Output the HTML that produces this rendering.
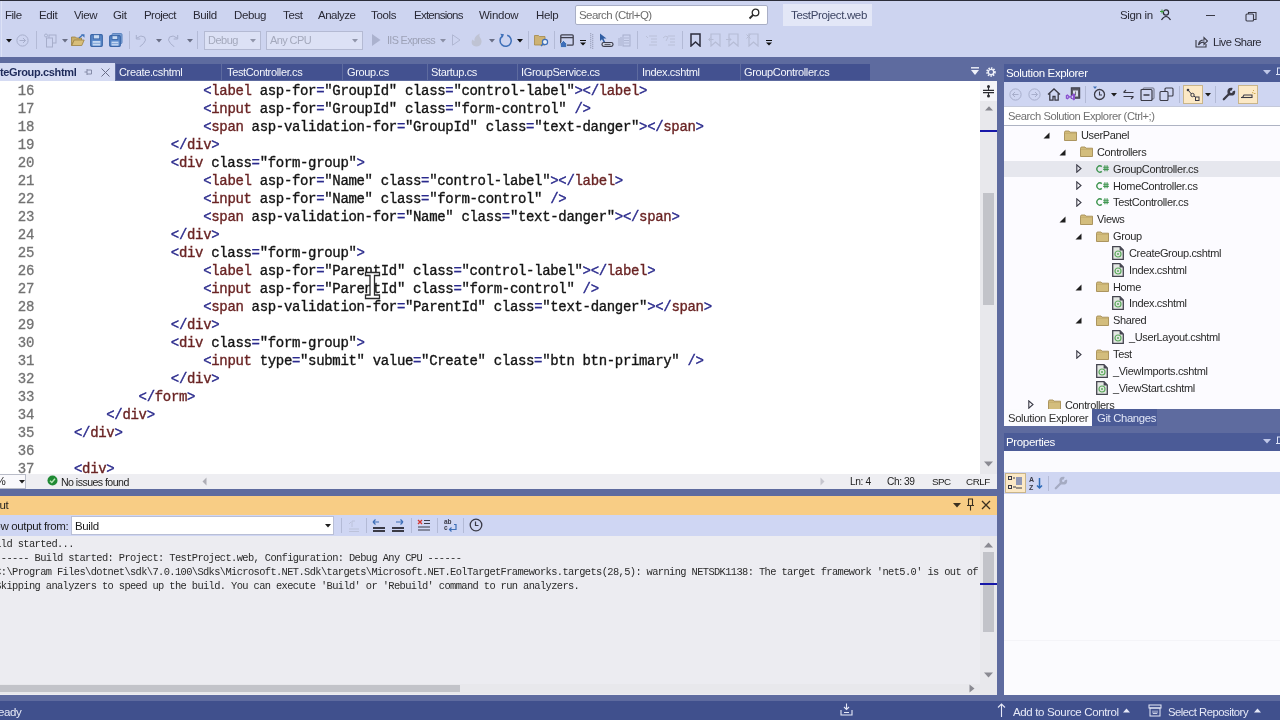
<!DOCTYPE html>
<html><head><meta charset="utf-8"><style>
*{margin:0;padding:0;box-sizing:border-box}
html,body{width:1280px;height:720px;overflow:hidden;}
body{will-change:transform;background:#CDD4F0;font-family:"Liberation Sans",sans-serif;font-size:11px;letter-spacing:-0.35px;color:#1E1E1E}
.a{position:absolute;display:block}
.t{position:absolute;white-space:pre;line-height:14px}
.menu{top:8px;color:#2A2A36;font-size:11.5px}
.code{position:absolute;font-family:"Liberation Mono",monospace;font-size:14px;letter-spacing:-0.33px;line-height:18px;white-space:pre;color:#141414;-webkit-text-stroke:0.35px currentColor}
.ln{position:absolute;white-space:pre;left:0;width:34px;text-align:right;font-family:"Liberation Mono",monospace;font-size:14px;letter-spacing:-0.33px;line-height:18px;color:#727272;-webkit-text-stroke:0.3px currentColor}
.b{color:#2A2A8C}.r{color:#6A2424}
.out{position:absolute;left:0;font-family:"Liberation Mono",monospace;font-size:10.4px;letter-spacing:-0.62px;line-height:13.9px;white-space:pre;color:#2A2A2A}
.tab{position:absolute;top:64px;height:16px;background:#435190;color:#F4F6FC}
.tab span{position:absolute;top:2px;white-space:pre}
</style></head><body>
<div class="a" style="left:0px;top:0px;width:1280px;height:1px;background:#2B2D3A;"></div>
<div class="a" style="left:1px;top:1px;width:1px;height:56px;background:#DDE2F6;"></div>
<div class="t menu" style="left:5px;letter-spacing:-0.5px">File</div>
<div class="t menu" style="left:39px;letter-spacing:-0.35px">Edit</div>
<div class="t menu" style="left:74px;letter-spacing:-0.35px">View</div>
<div class="t menu" style="left:113px;letter-spacing:-0.35px">Git</div>
<div class="t menu" style="left:144px;letter-spacing:-0.55px">Project</div>
<div class="t menu" style="left:193px;letter-spacing:-0.35px">Build</div>
<div class="t menu" style="left:234px;letter-spacing:-0.35px">Debug</div>
<div class="t menu" style="left:283px;letter-spacing:-0.35px">Test</div>
<div class="t menu" style="left:318px;letter-spacing:-0.5px">Analyze</div>
<div class="t menu" style="left:371px;letter-spacing:-0.35px">Tools</div>
<div class="t menu" style="left:414px;letter-spacing:-0.75px">Extensions</div>
<div class="t menu" style="left:479px;letter-spacing:-0.25px">Window</div>
<div class="t menu" style="left:536px;letter-spacing:-0.35px">Help</div>
<div class="a" style="left:575px;top:5px;width:193px;height:20px;background:#fff;border:1px solid #A9AFC6;border-radius:2px"></div>
<div class="t menu" style="left:579px;color:#6D6D6D;letter-spacing:-0.55px">Search (Ctrl+Q)</div>
<svg class="a" style="left:748px;top:8px" width="12" height="13" viewBox="0 0 12 13"><circle cx="7.5" cy="4.5" r="3.3" fill="none" stroke="#2A2A2A" stroke-width="1.3"/><path d="M5.2 6.8 L1.5 10.5" stroke="#2A2A2A" stroke-width="1.8"/></svg>
<div class="a" style="left:783px;top:4px;width:89px;height:22px;background:#E3E7F7;"></div>
<div class="t menu" style="left:791px;color:#3C4463">TestProject.web</div>
<div class="t menu" style="left:1120px">Sign in</div>
<svg class="a" style="left:1158px;top:8px" width="14" height="13" viewBox="0 0 14 13"><circle cx="8" cy="4.5" r="2.6" fill="none" stroke="#2A2A36" stroke-width="1.2"/><path d="M3.5 12 Q8 5 12.5 12" fill="none" stroke="#2A2A36" stroke-width="1.2"/><path d="M2 3.5h4M4 1.5v4" stroke="#3A9A3A" stroke-width="1"/></svg>
<div class="a" style="left:1206px;top:15px;width:9px;height:1px;background:#3A3A46;"></div>
<svg class="a" style="left:1245px;top:11px" width="13" height="11" viewBox="0 0 13 11"><rect x="1" y="3" width="7.5" height="7" fill="none" stroke="#3A3A46" stroke-width="1.1" rx="1"/><path d="M3.5 3V1.5h7.5v7H8.5" fill="none" stroke="#3A3A46" stroke-width="1.1"/></svg>
<svg class="a" style="left:6px;top:39px" width="6" height="4" viewBox="0 0 6 4"><path d="M0 0h6L3 3.5z" fill="#111"/></svg>
<svg class="a" style="left:16px;top:34px" width="13" height="13" viewBox="0 0 13 13"><circle cx="6.5" cy="6.5" r="5.6" fill="none" stroke="#A7AECB" stroke-width="1"/><path d="M3.5 6.5h6M7 4l2.5 2.5L7 9" fill="none" stroke="#A7AECB" stroke-width="1"/></svg>
<div class="a" style="left:36px;top:31px;width:1px;height:18px;background:#B3BAD6;"></div>
<svg class="a" style="left:43px;top:33px" width="14" height="15" viewBox="0 0 14 15"><rect x="6" y="2" width="7" height="8" fill="none" stroke="#A7AECB"/><rect x="3.5" y="5" width="6" height="9" fill="#CDD4F0" stroke="#A7AECB"/><circle cx="3" cy="2.5" r="1.5" fill="none" stroke="#A7AECB"/></svg>
<svg class="a" style="left:62px;top:39px" width="6" height="4" viewBox="0 0 6 4"><path d="M0 0h6L3 3.5z" fill="#6A6F86"/></svg>
<svg class="a" style="left:71px;top:34px" width="14" height="12" viewBox="0 0 14 12"><path d="M0.5 3h4l1 1h5v2.5H3L0.5 11.5z" fill="#C9AE6A" stroke="#9C8243" stroke-width="0.8"/><path d="M0.8 11.5 L3.2 6h10l-2.4 5.5z" fill="#D8BE7A" stroke="#9C8243" stroke-width="0.8"/><path d="M8 4 L11.5 1" stroke="#3F72B8" stroke-width="1.3"/><path d="M10 0.3h3.5v3.5z" fill="#3F72B8"/></svg>
<svg class="a" style="left:90px;top:34px" width="13" height="13" viewBox="0 0 13 13"><rect x="0.7" y="0.7" width="11.6" height="11.6" rx="1" fill="#5B8ACB" stroke="#3A66A8" stroke-width="1.2"/><rect x="3.3" y="0.7" width="6.4" height="4.2" fill="#C9DBF3" stroke="#3A66A8" stroke-width="0.9"/><rect x="2.6" y="7" width="7.8" height="4.6" fill="#C5D8F2"/><path d="M2.6 9.3h7.8" stroke="#6E97CF" stroke-width="0.8"/></svg>
<svg class="a" style="left:109px;top:33px" width="14" height="14" viewBox="0 0 14 14"><rect x="3" y="0.6" width="10" height="10" rx="1" fill="#7FA3D6" stroke="#5A82BD" stroke-width="1"/><rect x="0.7" y="2.7" width="10.6" height="10.6" rx="1" fill="#5B8ACB" stroke="#3A66A8" stroke-width="1.2"/><rect x="3" y="2.7" width="5.8" height="3.8" fill="#C9DBF3" stroke="#3A66A8" stroke-width="0.9"/><rect x="2.5" y="8.6" width="7" height="4" fill="#C5D8F2"/><path d="M2.5 10.6h7" stroke="#6E97CF" stroke-width="0.8"/></svg>
<div class="a" style="left:129px;top:31px;width:1px;height:18px;background:#B3BAD6;"></div>
<svg class="a" style="left:135px;top:34px" width="13" height="13" viewBox="0 0 13 13"><path d="M2 4 Q6 0.5 9.5 3 Q12 6 8.5 9.5 L4.5 13" fill="none" stroke="#A7AECB" stroke-width="1"/><path d="M1.3 1v4h4" fill="none" stroke="#A7AECB" stroke-width="1"/></svg>
<svg class="a" style="left:156px;top:39px" width="6" height="4" viewBox="0 0 6 4"><path d="M0 0h6L3 3.5z" fill="#6A6F86"/></svg>
<svg class="a" style="left:166px;top:34px" width="13" height="13" viewBox="0 0 13 13"><path d="M11 4 Q7 0.5 3.5 3 Q1 6 4.5 9.5 L8.5 13" fill="none" stroke="#A7AECB" stroke-width="1"/><path d="M11.7 1v4h-4" fill="none" stroke="#A7AECB" stroke-width="1"/></svg>
<svg class="a" style="left:187px;top:39px" width="6" height="4" viewBox="0 0 6 4"><path d="M0 0h6L3 3.5z" fill="#6A6F86"/></svg>
<div class="a" style="left:197px;top:31px;width:1px;height:18px;background:#B3BAD6;"></div>
<div class="a" style="left:204px;top:31px;width:57px;height:19px;background:#DCE1F5;border:1px solid #B4BAD3"></div>
<div class="t" style="left:208px;top:33px;color:#A4A9BC;font-size:11px;letter-spacing:-0.5px">Debug</div>
<svg class="a" style="left:250px;top:39px" width="6" height="4" viewBox="0 0 6 4"><path d="M0 0h6L3 3.5z" fill="#9095AA"/></svg>
<div class="a" style="left:266px;top:31px;width:97px;height:19px;background:#DCE1F5;border:1px solid #B4BAD3"></div>
<div class="t" style="left:270px;top:33px;color:#A4A9BC;font-size:11px;letter-spacing:-0.6px">Any CPU</div>
<svg class="a" style="left:352px;top:39px" width="6" height="4" viewBox="0 0 6 4"><path d="M0 0h6L3 3.5z" fill="#9095AA"/></svg>
<svg class="a" style="left:372px;top:34px" width="9" height="12" viewBox="0 0 9 12"><path d="M0 0L8.5 6L0 12z" fill="#ABB2CE"/></svg>
<div class="t" style="left:387px;top:33px;color:#9DA2B7;font-size:10.8px;letter-spacing:-0.65px">IIS Express</div>
<svg class="a" style="left:440px;top:39px" width="6" height="4" viewBox="0 0 6 4"><path d="M0 0h6L3 3.5z" fill="#8A8FA5"/></svg>
<svg class="a" style="left:452px;top:34px" width="9" height="12" viewBox="0 0 9 12"><path d="M0.5 0.8L8 6L0.5 11.2z" fill="none" stroke="#B0B7D2" stroke-width="1"/></svg>
<svg class="a" style="left:470px;top:33px" width="13" height="14" viewBox="0 0 13 14"><path d="M6.5 13.5 C2 13.5 0.5 9.5 2.5 6.5 C3.5 8 4.5 8 4.5 8 C4 5 6 2 10 0.5 C8.5 3 10 4 11 6 C12.5 9 11 13.5 6.5 13.5z" fill="#BFC3D3"/></svg>
<svg class="a" style="left:489px;top:39px" width="6" height="4" viewBox="0 0 6 4"><path d="M0 0h6L3 3.5z" fill="#6A6F86"/></svg>
<svg class="a" style="left:498px;top:33px" width="15" height="15" viewBox="0 0 15 15"><path d="M4.3 3.2 A5.6 5.6 0 1 0 9.2 2.3" fill="none" stroke="#3E6FB8" stroke-width="1.5"/><path d="M2.3 0.8 L6 1.3 L4.6 4.8z" fill="#3E6FB8"/></svg>
<svg class="a" style="left:517px;top:39px" width="6" height="4" viewBox="0 0 6 4"><path d="M0 0h6L3 3.5z" fill="#111"/></svg>
<div class="a" style="left:528px;top:31px;width:1px;height:18px;background:#B3BAD6;"></div>
<svg class="a" style="left:534px;top:34px" width="16" height="13" viewBox="0 0 16 13"><path d="M0.5 1.5h4l1 1h5.5v8.5H0.5z" fill="#CDB273" stroke="#A38848" stroke-width="0.8"/><circle cx="11" cy="8" r="2.6" fill="#E8F0FA" stroke="#3E6FB8" stroke-width="1.2"/><path d="M9.2 9.8L7 12" stroke="#3E6FB8" stroke-width="1.3"/></svg>
<div class="a" style="left:554px;top:31px;width:1px;height:18px;background:#B3BAD6;"></div>
<svg class="a" style="left:560px;top:34px" width="15" height="14" viewBox="0 0 15 14"><rect x="0.8" y="0.8" width="12.4" height="10.4" rx="1" fill="none" stroke="#40404E" stroke-width="1.3"/><path d="M1 3.6h12" stroke="#40404E" stroke-width="1.3"/><path d="M0.5 9.5L3.5 6.5L6.5 9.5V13.5H0.5z" fill="#3E6FB8" stroke="#E8EEF8" stroke-width="0.6"/></svg>
<svg class="a" style="left:580px;top:40px" width="6" height="6" viewBox="0 0 6 6"><path d="M0 0.5h6" stroke="#111" stroke-width="1"/><path d="M0 2.5h6L3 5.5z" fill="#111"/></svg>
<svg class="a" style="left:589px;top:33px" width="6" height="16" viewBox="0 0 6 16"><rect x="1" y="0" width="1.3" height="1.3" fill="#A3A9C4"/><rect x="3" y="1" width="1.3" height="1.3" fill="#A3A9C4"/><rect x="1" y="2" width="1.3" height="1.3" fill="#A3A9C4"/><rect x="3" y="3" width="1.3" height="1.3" fill="#A3A9C4"/><rect x="1" y="4" width="1.3" height="1.3" fill="#A3A9C4"/><rect x="3" y="5" width="1.3" height="1.3" fill="#A3A9C4"/><rect x="1" y="6" width="1.3" height="1.3" fill="#A3A9C4"/><rect x="3" y="7" width="1.3" height="1.3" fill="#A3A9C4"/><rect x="1" y="8" width="1.3" height="1.3" fill="#A3A9C4"/><rect x="3" y="9" width="1.3" height="1.3" fill="#A3A9C4"/><rect x="1" y="10" width="1.3" height="1.3" fill="#A3A9C4"/><rect x="3" y="11" width="1.3" height="1.3" fill="#A3A9C4"/><rect x="1" y="12" width="1.3" height="1.3" fill="#A3A9C4"/><rect x="3" y="13" width="1.3" height="1.3" fill="#A3A9C4"/><rect x="1" y="14" width="1.3" height="1.3" fill="#A3A9C4"/><rect x="3" y="15" width="1.3" height="1.3" fill="#A3A9C4"/></svg>
<svg class="a" style="left:599px;top:33px" width="15" height="14" viewBox="0 0 15 14"><path d="M1 0.5V8L3 6.2L5 10L6.2 9.2L4.5 5.5H7.5z" fill="#2F5DA3"/><rect x="3" y="9.5" width="11" height="3.8" rx="1.8" fill="#D7DCEC" stroke="#3C3C4A" stroke-width="1.2"/><path d="M5.5 11.4h6" stroke="#3C3C4A" stroke-width="0.9"/></svg>
<svg class="a" style="left:618px;top:34px" width="13" height="13" viewBox="0 0 13 13"><path d="M1 4v8M3 3v9" stroke="#A7AECB"/><rect x="5" y="1" width="7" height="11" fill="none" stroke="#A7AECB"/><path d="M6 4h5M6 6.5h5M6 9h5" stroke="#A7AECB" stroke-width="0.8"/></svg>
<div class="a" style="left:637px;top:31px;width:1px;height:18px;background:#B3BAD6;"></div>
<svg class="a" style="left:645px;top:34px" width="13" height="13" viewBox="0 0 13 13"><path d="M4 2h8M6 5h6M6 8h6M4 11h8" stroke="#BAC0D8" stroke-width="1"/><path d="M1 2l2 2" stroke="#BAC0D8"/></svg>
<svg class="a" style="left:662px;top:34px" width="14" height="13" viewBox="0 0 14 13"><path d="M1 4 Q3 1 6 3 L4 7" fill="none" stroke="#BAC0D8" stroke-width="1"/><path d="M6 2h7M8 5h5M8 8h5M6 11h7" stroke="#BAC0D8" stroke-width="1"/></svg>
<div class="a" style="left:682px;top:31px;width:1px;height:18px;background:#B3BAD6;"></div>
<svg class="a" style="left:690px;top:33px" width="11" height="14" viewBox="0 0 11 14"><path d="M1 1h9v12L5.5 9L1 13z" fill="none" stroke="#2C2C3C" stroke-width="1.5"/></svg>
<svg class="a" style="left:708px;top:33px" width="13" height="14" viewBox="0 0 13 14"><path d="M3 1h9v12L7.5 9L3 13z" fill="none" stroke="#B6BCD5" stroke-width="1.2"/><path d="M0.5 6.5h5M0.5 6.5l2-2M0.5 6.5l2 2" stroke="#B6BCD5"/></svg>
<svg class="a" style="left:726px;top:33px" width="13" height="14" viewBox="0 0 13 14"><path d="M3 1h9v12L7.5 9L3 13z" fill="none" stroke="#B6BCD5" stroke-width="1.2"/><path d="M0 6.5h5M5 6.5l-2-2M5 6.5l-2 2" stroke="#B6BCD5"/></svg>
<svg class="a" style="left:746px;top:33px" width="13" height="14" viewBox="0 0 13 14"><path d="M3 1h9v12L7.5 9L3 13z" fill="none" stroke="#B6BCD5" stroke-width="1.2"/><path d="M0.5 1.5l4 4M4.5 1.5l-4 4" stroke="#B6BCD5"/></svg>
<svg class="a" style="left:766px;top:40px" width="6" height="6" viewBox="0 0 6 6"><path d="M0 0.5h6" stroke="#111" stroke-width="1"/><path d="M0 2.5h6L3 5.5z" fill="#111"/></svg>
<svg class="a" style="left:1195px;top:36px" width="13" height="12" viewBox="0 0 13 12"><path d="M1 4v7h10V8" fill="none" stroke="#3A3A46" stroke-width="1.1"/><path d="M3.5 9 Q4 4 9 4V1.5L12.5 5L9 8.5V6 Q5.5 6 3.5 9z" fill="none" stroke="#3A3A46" stroke-width="1.1"/></svg>
<div class="t" style="left:1213px;top:35px;font-size:11.2px;letter-spacing:-0.55px;color:#2A2A36">Live Share</div>
<div class="a" style="left:0px;top:57px;width:1280px;height:7px;background:#5E6B9F;"></div>
<div class="a" style="left:0px;top:64px;width:1004px;height:17px;background:#5E6B9F;"></div>
<div class="a" style="left:0px;top:63px;width:115px;height:18px;background:#D5DBF3;"></div>
<div class="t" style="left:0;top:65px;font-weight:bold;color:#1E2A5A">teGroup.cshtml</div>
<svg class="a" style="left:84px;top:68px" width="9" height="8" viewBox="0 0 9 8"><path d="M0.5 4h2.5M3 1v6M3 2h4.5v4H3" fill="none" stroke="#7D83A0" stroke-width="0.9"/></svg>
<svg class="a" style="left:101px;top:68px" width="9" height="9" viewBox="0 0 9 9"><path d="M0.5 0.5l8 8M8.5 0.5l-8 8" stroke="#686D88" stroke-width="1"/></svg>
<div class="tab" style="left:116px;width:105px"><span style="left:3px">Create.cshtml</span></div>
<div class="tab" style="left:222px;width:120px"><span style="left:5px">TestController.cs</span></div>
<div class="tab" style="left:343px;width:84px"><span style="left:4px">Group.cs</span></div>
<div class="tab" style="left:428px;width:89px"><span style="left:3px">Startup.cs</span></div>
<div class="tab" style="left:518px;width:119px"><span style="left:3px">IGroupService.cs</span></div>
<div class="tab" style="left:638px;width:102px"><span style="left:4px">Index.cshtml</span></div>
<div class="tab" style="left:741px;width:129px"><span style="left:3px">GroupController.cs</span></div>
<svg class="a" style="left:971px;top:67px" width="8" height="9" viewBox="0 0 8 9"><path d="M0 0.8h8" stroke="#F0F2FA" stroke-width="1.4"/><path d="M0 3h8L4 8z" fill="#F0F2FA"/></svg>
<svg class="a" style="left:986px;top:67px" width="10" height="10" viewBox="0 0 10 10"><circle cx="5" cy="5" r="3.9" fill="none" stroke="#F0F2FA" stroke-width="1.8" stroke-dasharray="1.5 1.05"/><circle cx="5" cy="5" r="2.7" fill="none" stroke="#F0F2FA" stroke-width="1.3"/></svg>
<div class="a" style="left:0;top:81px;width:980px;height:393px;background:#fff;overflow:hidden"><div class="ln" style="top:1px">16
17
18
19
20
21
22
23
24
25
26
27
28
29
30
31
32
33
34
35
36
37</div><div class="code" style="left:74px;top:1px">                <span class="b">&lt;</span><span class="r">label</span> asp-for<span class="b">=</span>&quot;GroupId&quot; class<span class="b">=</span>&quot;control-label&quot;<span class="b">&gt;</span><span class="b">&lt;/</span><span class="r">label</span><span class="b">&gt;</span>
                <span class="b">&lt;</span><span class="r">input</span> asp-for<span class="b">=</span>&quot;GroupId&quot; class<span class="b">=</span>&quot;form-control&quot; <span class="b">/&gt;</span>
                <span class="b">&lt;</span><span class="r">span</span> asp-validation-for<span class="b">=</span>&quot;GroupId&quot; class<span class="b">=</span>&quot;text-danger&quot;<span class="b">&gt;</span><span class="b">&lt;/</span><span class="r">span</span><span class="b">&gt;</span>
            <span class="b">&lt;/</span><span class="r">div</span><span class="b">&gt;</span>
            <span class="b">&lt;</span><span class="r">div</span> class<span class="b">=</span>&quot;form-group&quot;<span class="b">&gt;</span>
                <span class="b">&lt;</span><span class="r">label</span> asp-for<span class="b">=</span>&quot;Name&quot; class<span class="b">=</span>&quot;control-label&quot;<span class="b">&gt;</span><span class="b">&lt;/</span><span class="r">label</span><span class="b">&gt;</span>
                <span class="b">&lt;</span><span class="r">input</span> asp-for<span class="b">=</span>&quot;Name&quot; class<span class="b">=</span>&quot;form-control&quot; <span class="b">/&gt;</span>
                <span class="b">&lt;</span><span class="r">span</span> asp-validation-for<span class="b">=</span>&quot;Name&quot; class<span class="b">=</span>&quot;text-danger&quot;<span class="b">&gt;</span><span class="b">&lt;/</span><span class="r">span</span><span class="b">&gt;</span>
            <span class="b">&lt;/</span><span class="r">div</span><span class="b">&gt;</span>
            <span class="b">&lt;</span><span class="r">div</span> class<span class="b">=</span>&quot;form-group&quot;<span class="b">&gt;</span>
                <span class="b">&lt;</span><span class="r">label</span> asp-for<span class="b">=</span>&quot;ParentId&quot; class<span class="b">=</span>&quot;control-label&quot;<span class="b">&gt;</span><span class="b">&lt;/</span><span class="r">label</span><span class="b">&gt;</span>
                <span class="b">&lt;</span><span class="r">input</span> asp-for<span class="b">=</span>&quot;ParentId&quot; class<span class="b">=</span>&quot;form-control&quot; <span class="b">/&gt;</span>
                <span class="b">&lt;</span><span class="r">span</span> asp-validation-for<span class="b">=</span>&quot;ParentId&quot; class<span class="b">=</span>&quot;text-danger&quot;<span class="b">&gt;</span><span class="b">&lt;/</span><span class="r">span</span><span class="b">&gt;</span>
            <span class="b">&lt;/</span><span class="r">div</span><span class="b">&gt;</span>
            <span class="b">&lt;</span><span class="r">div</span> class<span class="b">=</span>&quot;form-group&quot;<span class="b">&gt;</span>
                <span class="b">&lt;</span><span class="r">input</span> type<span class="b">=</span>&quot;submit&quot; value<span class="b">=</span>&quot;Create&quot; class<span class="b">=</span>&quot;btn btn-primary&quot; <span class="b">/&gt;</span>
            <span class="b">&lt;/</span><span class="r">div</span><span class="b">&gt;</span>
        <span class="b">&lt;/</span><span class="r">form</span><span class="b">&gt;</span>
    <span class="b">&lt;/</span><span class="r">div</span><span class="b">&gt;</span>
<span class="b">&lt;/</span><span class="r">div</span><span class="b">&gt;</span>

<span class="b">&lt;</span><span class="r">div</span><span class="b">&gt;</span></div></div>
<svg class="a" style="left:364px;top:271px" width="17" height="29" viewBox="0 0 17 29"><path d="M1.5 1.5H15.5V4.5H10.5V24H15.5V27.5H1.5V24H6V4.5H1.5z" fill="#fff" stroke="#2A2A2A" stroke-width="1.3"/></svg>
<div class="a" style="left:980px;top:81px;width:17px;height:393px;background:#E8E8EC;"></div>
<div class="a" style="left:980px;top:81px;width:17px;height:20px;background:#F4F4F8;"></div>
<svg class="a" style="left:982px;top:84px" width="13" height="15" viewBox="0 0 13 15"><circle cx="6.5" cy="2.5" r="1.5" fill="#2A2A30"/><circle cx="6.5" cy="12" r="1.5" fill="#2A2A30"/><path d="M6.5 2.5v4M6.5 8.5v3.5" stroke="#2A2A30" stroke-width="1.1"/><path d="M1 6.4h11M1 8.6h11" stroke="#2A2A30" stroke-width="1.3"/></svg>
<svg class="a" style="left:985px;top:106px" width="8" height="5" viewBox="0 0 8 5"><path d="M0 4.5L4 0.3L8 4.5z" fill="#86868E"/></svg>
<div class="a" style="left:980px;top:130px;width:17px;height:2px;background:#1717A8;"></div>
<div class="a" style="left:983px;top:193px;width:11px;height:112px;background:#C2C3C9;"></div>
<svg class="a" style="left:984px;top:461px" width="9" height="6" viewBox="0 0 9 6"><path d="M0 0.5L4.5 5.5L9 0.5z" fill="#8A8A92"/></svg>
<div class="a" style="left:0px;top:474px;width:997px;height:15px;background:#EEEEF2;"></div>
<div class="a" style="left:-1px;top:474px;width:27px;height:15px;background:#F9F9FC;border:1px solid #B9BCC8"></div>
<svg class="a" style="left:19px;top:480px" width="6" height="4" viewBox="0 0 6 4"><path d="M0 0h6L3 3.5z" fill="#222"/></svg>
<div class="t" style="left:-4px;top:474px;color:#1E1E1E">%</div>
<svg class="a" style="left:47px;top:475px" width="11" height="11" viewBox="0 0 11 11"><circle cx="5.5" cy="5.5" r="5" fill="#1F8A34"/><path d="M3 5.7L4.8 7.5L8 3.8" fill="none" stroke="#B8E6B8" stroke-width="1.4"/></svg>
<div class="t" style="left:61px;top:475px;color:#1E1E1E;font-size:10.6px;letter-spacing:-0.55px">No issues found</div>
<svg class="a" style="left:202px;top:477px" width="5" height="9" viewBox="0 0 5 9"><path d="M4.5 0.5L0.5 4.5L4.5 8.5z" fill="#AEAEB6"/></svg>
<svg class="a" style="left:820px;top:477px" width="5" height="9" viewBox="0 0 5 9"><path d="M0.5 0.5L4.5 4.5L0.5 8.5z" fill="#C6C6CE"/></svg>
<div class="t" style="left:850px;top:475px;color:#1E1E1E;font-size:10.2px;letter-spacing:-0.4px">Ln: 4</div>
<div class="t" style="left:887px;top:475px;color:#1E1E1E;font-size:10.2px;letter-spacing:-0.4px">Ch: 39</div>
<div class="t" style="left:932px;top:475px;color:#1E1E1E;font-size:9.8px;letter-spacing:-0.5px">SPC</div>
<div class="t" style="left:966px;top:475px;color:#1E1E1E;font-size:9.8px;letter-spacing:-0.45px">CRLF</div>
<div class="a" style="left:0px;top:489px;width:1004px;height:7px;background:#5E6B9F;"></div>
<div class="a" style="left:997px;top:57px;width:7px;height:644px;background:#5E6B9F;"></div>
<div class="a" style="left:0px;top:496px;width:997px;height:19px;background:#F8CD85;"></div>
<div class="t" style="left:-24px;top:498px;color:#1E1E1E;font-size:11.5px">Output</div>
<svg class="a" style="left:953px;top:503px" width="8" height="5" viewBox="0 0 8 5"><path d="M0 0h8L4 4.5z" fill="#3A3020"/></svg>
<svg class="a" style="left:966px;top:498px" width="9" height="13" viewBox="0 0 9 13"><path d="M2 1h5M2.5 1v6M6.5 1v6M1 7.5h7M4.5 7.5v5" fill="none" stroke="#3A3020" stroke-width="1.1"/></svg>
<svg class="a" style="left:981px;top:500px" width="10" height="10" viewBox="0 0 10 10"><path d="M1 1l8 8M9 1l-8 8" stroke="#3A3020" stroke-width="1.3"/></svg>
<div class="a" style="left:0px;top:515px;width:997px;height:21px;background:#CFD6F3;"></div>
<div class="t" style="left:-19px;top:519px;color:#1E1E1E;font-size:11.5px">Show output from:</div>
<div class="a" style="left:71px;top:516px;width:263px;height:19px;background:#fff;border:1px solid #B9BFD6"></div>
<div class="t" style="left:75px;top:519px;color:#1E1E1E;font-size:11.5px">Build</div>
<svg class="a" style="left:325px;top:524px" width="6" height="4" viewBox="0 0 6 4"><path d="M0 0h6L3 3.5z" fill="#1E1E1E"/></svg>
<div class="a" style="left:341px;top:518px;width:1px;height:15px;background:#B3BAD6;"></div>
<svg class="a" style="left:346px;top:519px" width="14" height="13" viewBox="0 0 14 13"><path d="M3 10h10M3 12.5h10" stroke="#BCC2DA" stroke-width="1.2"/><path d="M6 8V2h3" fill="none" stroke="#BCC2DA" stroke-width="1"/><path d="M3 5l2-2" stroke="#BCC2DA"/></svg>
<div class="a" style="left:366px;top:518px;width:1px;height:15px;background:#B3BAD6;"></div>
<svg class="a" style="left:372px;top:519px" width="14" height="14" viewBox="0 0 14 14"><path d="M1 3h6M1 3l2.5-2.5M1 3l2.5 2.5" fill="none" stroke="#3E6FB8" stroke-width="1.2"/><rect x="1" y="8" width="12" height="2" fill="#3A3A46"/><rect x="1" y="11" width="12" height="2" fill="#3A3A46"/></svg>
<svg class="a" style="left:391px;top:519px" width="14" height="14" viewBox="0 0 14 14"><path d="M5 3h7M12 3l-2.5-2.5M12 3l-2.5 2.5" fill="none" stroke="#3E6FB8" stroke-width="1.2"/><rect x="1" y="8" width="12" height="2" fill="#3A3A46"/><rect x="1" y="11" width="12" height="2" fill="#3A3A46"/></svg>
<div class="a" style="left:411px;top:518px;width:1px;height:15px;background:#B3BAD6;"></div>
<svg class="a" style="left:417px;top:519px" width="14" height="14" viewBox="0 0 14 14"><path d="M1 1l4 4M5 1l-4 4" stroke="#D3342F" stroke-width="1.3"/><path d="M7 1.5h6M7 4.5h6M1 8h12M1 11h12" stroke="#3A3A46" stroke-width="1.1"/></svg>
<div class="a" style="left:437px;top:518px;width:1px;height:15px;background:#B3BAD6;"></div>
<svg class="a" style="left:443px;top:518px" width="15" height="15" viewBox="0 0 15 15"><text x="1" y="6" font-family="Liberation Sans" font-size="6.5" font-weight="bold" fill="#3A3A46" letter-spacing="-0.2">ab</text><text x="1" y="12" font-family="Liberation Sans" font-size="6.5" font-weight="bold" fill="#3A3A46">c</text><path d="M11 6.5h2v5H6.5M8.5 9.5l-2 2l2 2" fill="none" stroke="#3E6FB8" stroke-width="1.2"/></svg>
<div class="a" style="left:463px;top:518px;width:1px;height:15px;background:#B3BAD6;"></div>
<svg class="a" style="left:469px;top:518px" width="14" height="14" viewBox="0 0 14 14"><circle cx="7" cy="7" r="5.8" fill="none" stroke="#3A3A46" stroke-width="1.3"/><path d="M6.5 3.5v4h3" fill="none" stroke="#3A3A46" stroke-width="1.2"/></svg>
<div class="a" style="left:0px;top:536px;width:997px;height:159px;background:#ECECF1;"></div>
<div class="a" style="left:0;top:536px;width:980px;height:150px;overflow:hidden"><div class="out" style="left:-16px;top:2.4px">Build started...
1&gt;------ Build started: Project: TestProject.web, Configuration: Debug Any CPU ------
1&gt;C:\Program Files\dotnet\sdk\7.0.100\Sdks\Microsoft.NET.Sdk\targets\Microsoft.NET.EolTargetFrameworks.targets(28,5): warning NETSDK1138: The target framework 'net5.0' is out of support and will not receive security updates in the future.
1&gt;Skipping analyzers to speed up the build. You can execute 'Build' or 'Rebuild' command to run analyzers.</div></div>
<div class="a" style="left:980px;top:536px;width:17px;height:159px;background:#E8E8EC;"></div>
<svg class="a" style="left:984px;top:542px" width="9" height="6" viewBox="0 0 9 6"><path d="M0 5.5L4.5 0.5L9 5.5z" fill="#8A8A92"/></svg>
<div class="a" style="left:983px;top:552px;width:11px;height:80px;background:#C2C3C9;"></div>
<div class="a" style="left:980px;top:583px;width:17px;height:2px;background:#1717A8;"></div>
<svg class="a" style="left:984px;top:672px" width="9" height="6" viewBox="0 0 9 6"><path d="M0 0.5L4.5 5.5L9 0.5z" fill="#8A8A92"/></svg>
<div class="a" style="left:0px;top:684px;width:980px;height:10px;background:#E8E8EC;"></div>
<div class="a" style="left:0px;top:685px;width:460px;height:7px;background:#C2C3C9;"></div>
<svg class="a" style="left:969px;top:684px" width="6" height="9" viewBox="0 0 6 9"><path d="M0.5 0.5L5.5 4.5L0.5 8.5z" fill="#8A8A92"/></svg>
<div class="a" style="left:0px;top:695px;width:1280px;height:6px;background:#5E6B9F;"></div>
<div class="a" style="left:0px;top:701px;width:1280px;height:19px;background:#40508D;"></div>
<div class="t" style="left:-10px;top:705px;color:#E6E9F7;font-size:11.5px">Ready</div>
<svg class="a" style="left:840px;top:703px" width="13" height="13" viewBox="0 0 13 13"><path d="M6.5 0.5v6M4 4l2.5 2.5L9 4" fill="none" stroke="#E6E9F7" stroke-width="1.1"/><path d="M1 7v5h11V7M4 9.5h5" fill="none" stroke="#E6E9F7" stroke-width="1.1"/></svg>
<svg class="a" style="left:997px;top:703px" width="9" height="14" viewBox="0 0 9 14"><path d="M4.5 1v13M1 4.5L4.5 1L8 4.5" fill="none" stroke="#E6E9F7" stroke-width="1.1"/></svg>
<div class="t" style="left:1013px;top:705px;color:#E6E9F7;font-size:11.5px">Add to Source Control</div>
<svg class="a" style="left:1123px;top:708px" width="7" height="5" viewBox="0 0 7 5"><path d="M0 4.5L3.5 0.5L7 4.5z" fill="#E6E9F7"/></svg>
<svg class="a" style="left:1148px;top:704px" width="14" height="13" viewBox="0 0 14 13"><rect x="1" y="1" width="12" height="3" fill="none" stroke="#E6E9F7" stroke-width="1"/><rect x="2" y="4" width="10" height="8" fill="none" stroke="#E6E9F7" stroke-width="1"/><path d="M5 6.5v3h4v-3M7 6.5v3" fill="none" stroke="#E6E9F7" stroke-width="0.8"/></svg>
<div class="t" style="left:1168px;top:705px;color:#E6E9F7;font-size:11.3px;letter-spacing:-0.5px">Select Repository</div>
<svg class="a" style="left:1254px;top:708px" width="7" height="5" viewBox="0 0 7 5"><path d="M0 4.5L3.5 0.5L7 4.5z" fill="#E6E9F7"/></svg>
<div class="a" style="left:1004px;top:64px;width:276px;height:18px;background:#4B5B97;"></div>
<div class="t" style="left:1006px;top:66px;color:#fff;font-size:11.5px">Solution Explorer</div>
<svg class="a" style="left:1263px;top:70px" width="8" height="5" viewBox="0 0 8 5"><path d="M0 0h8L4 4.5z" fill="#BFC7E8"/></svg>
<svg class="a" style="left:1276px;top:67px" width="6" height="12" viewBox="0 0 6 12"><path d="M1 1h5M1.5 1v6M0 7.5h6" fill="none" stroke="#DDE3F7" stroke-width="1"/></svg>
<div class="a" style="left:1004px;top:82px;width:276px;height:24px;background:#CFD6F2;"></div>
<svg class="a" style="left:1009px;top:88px" width="13" height="13" viewBox="0 0 13 13"><circle cx="6.5" cy="6.5" r="5.6" fill="none" stroke="#A7AECB" stroke-width="1"/><path d="M9.5 6.5h-6M6 4L3.5 6.5L6 9" fill="none" stroke="#A7AECB" stroke-width="1"/></svg>
<svg class="a" style="left:1028px;top:88px" width="13" height="13" viewBox="0 0 13 13"><circle cx="6.5" cy="6.5" r="5.6" fill="none" stroke="#A7AECB" stroke-width="1"/><path d="M3.5 6.5h6M7 4l2.5 2.5L7 9" fill="none" stroke="#A7AECB" stroke-width="1"/></svg>
<svg class="a" style="left:1047px;top:88px" width="14" height="13" viewBox="0 0 14 13"><path d="M1 6.5L7 1L13 6.5M2.8 5v7.2h3.2V8.5h2v3.7h3.2V5" fill="none" stroke="#3A3A46" stroke-width="1.3"/></svg>
<svg class="a" style="left:1065px;top:87px" width="16" height="15" viewBox="0 0 16 15"><rect x="6.3" y="0.8" width="8.4" height="10.4" fill="#5A5A66" stroke="#3A3A46" stroke-width="1"/><rect x="8" y="3.5" width="5" height="6" fill="#D8DCEC"/><path d="M10.5 4.5v4" stroke="#5A5A66" stroke-width="0.8"/><path d="M0.8 8.3L2.5 7.2L5 9.6L8.8 6.2L10 7V12.6L8.8 13.4L5 10.2L2.5 12.4L0.8 11.4z" fill="#8A4FCF"/><path d="M2.2 8.8V11L3.5 9.9z M8 8.6V11.4L6.3 10z" fill="#CFD6F2"/></svg>
<div class="a" style="left:1085px;top:86px;width:1px;height:17px;background:#B3BAD6;"></div>
<svg class="a" style="left:1092px;top:86px" width="14" height="15" viewBox="0 0 14 15"><path d="M1 0.5h4L3 3z" fill="#3E6FB8"/><circle cx="7.5" cy="8.5" r="5" fill="none" stroke="#3A3A46" stroke-width="1.3"/><path d="M7.5 5.5v3.5h2.5" fill="none" stroke="#3A3A46" stroke-width="1.1"/></svg>
<svg class="a" style="left:1111px;top:93px" width="6" height="4" viewBox="0 0 6 4"><path d="M0 0h6L3 3.5z" fill="#1E1E1E"/></svg>
<svg class="a" style="left:1122px;top:89px" width="13" height="11" viewBox="0 0 13 11"><path d="M1.5 3.5h10M1.5 3.5L4 1M1.5 7.5h10M11.5 7.5L9 10" fill="none" stroke="#3A3A46" stroke-width="1.2"/></svg>
<svg class="a" style="left:1140px;top:87px" width="15" height="14" viewBox="0 0 15 14"><rect x="3" y="1" width="11" height="11" rx="1" fill="none" stroke="#6B6F80" stroke-width="1"/><rect x="1" y="2.5" width="11" height="11" rx="1" fill="#CFD6F2" stroke="#3A3A46" stroke-width="1.2"/><path d="M3.5 8h6" stroke="#3A3A46" stroke-width="1.5"/></svg>
<svg class="a" style="left:1159px;top:87px" width="15" height="14" viewBox="0 0 15 14"><rect x="6" y="1" width="8" height="8" rx="1" fill="none" stroke="#3A3A46" stroke-width="1.1"/><rect x="1" y="4.5" width="8" height="9" rx="1" fill="#CFD6F2" stroke="#3A3A46" stroke-width="1.1"/></svg>
<div class="a" style="left:1179px;top:86px;width:1px;height:17px;background:#B3BAD6;"></div>
<div class="a" style="left:1183px;top:85px;width:20px;height:19px;background:#FCE9C6;border:1px solid #C9B58A"></div>
<svg class="a" style="left:1186px;top:88px" width="14" height="13" viewBox="0 0 14 13"><circle cx="2" cy="2" r="1.3" fill="#3A3A46"/><path d="M2 2L5.5 6M8 8L10 10" stroke="#3A3A46" stroke-width="1"/><circle cx="6.5" cy="7" r="1.7" fill="none" stroke="#3A3A46" stroke-width="1"/><rect x="9.5" y="9" width="3.5" height="3.5" fill="none" stroke="#3A3A46" stroke-width="1"/></svg>
<svg class="a" style="left:1205px;top:93px" width="6" height="4" viewBox="0 0 6 4"><path d="M0 0h6L3 3.5z" fill="#1E1E1E"/></svg>
<div class="a" style="left:1215px;top:86px;width:1px;height:17px;background:#B3BAD6;"></div>
<svg class="a" style="left:1222px;top:87px" width="14" height="14" viewBox="0 0 14 14"><path d="M1.8 12.2L7.5 6.5" stroke="#3A3A46" stroke-width="2.3" stroke-linecap="round"/><circle cx="9.3" cy="4.7" r="3.9" fill="#3A3A46"/><path d="M9.3 4.7L11.2 -0.5L15 -0.5L15 2.8z" fill="#CFD6F2"/><circle cx="9.3" cy="4.7" r="1.3" fill="#CFD6F2"/></svg>
<div class="a" style="left:1238px;top:85px;width:20px;height:19px;background:#FCE9C6;border:1px solid #C9B58A"></div>
<svg class="a" style="left:1240px;top:89px" width="16" height="11" viewBox="0 0 16 11"><path d="M1 8.5h10.5" stroke="#3A3A46" stroke-width="1.1"/><path d="M2.5 8.5L4 6h8v2.5z" fill="none" stroke="#3A3A46" stroke-width="1.1"/><path d="M13 2l1-1M14 4.5h1.5M12 3.5l1.5 0.5" stroke="#C09A3A" stroke-width="0.8"/></svg>
<div class="a" style="left:1004px;top:106px;width:276px;height:20px;background:#fff;border-top:1px solid #C4C9DA;border-bottom:1px solid #AEB3C3"></div>
<div class="t" style="left:1008px;top:109px;color:#717171;font-size:11.2px;letter-spacing:-0.45px">Search Solution Explorer (Ctrl+;)</div>
<div class="a" style="left:1004px;top:126px;width:276px;height:283px;background:#FCFBFF;"></div>
<div class="a" style="left:1004px;top:161px;width:276px;height:16px;background:#E6E7EE;"></div>
<svg class="a" style="left:1043px;top:132px" width="7" height="7" viewBox="0 0 7 7"><path d="M6.5 0.5V6.5H0.5z" fill="#1E1E1E"/></svg>
<svg class="a" style="left:1064px;top:130px" width="13" height="11" viewBox="0 0 13 11"><path d="M0.5 2.2V10.5h12V2.2H6L5 1H1.2z" fill="#D3BD7D" stroke="#A58C55" stroke-width="0.9"/><path d="M0.8 3.3h11.4" stroke="#C2A96A" stroke-width="0.8"/></svg>
<div class="t" style="left:1081px;top:128px;color:#2A2A2A;font-size:11px">UserPanel</div>
<svg class="a" style="left:1059px;top:149px" width="7" height="7" viewBox="0 0 7 7"><path d="M6.5 0.5V6.5H0.5z" fill="#1E1E1E"/></svg>
<svg class="a" style="left:1080px;top:146px" width="13" height="11" viewBox="0 0 13 11"><path d="M0.5 2.2V10.5h12V2.2H6L5 1H1.2z" fill="#D3BD7D" stroke="#A58C55" stroke-width="0.9"/><path d="M0.8 3.3h11.4" stroke="#C2A96A" stroke-width="0.8"/></svg>
<div class="t" style="left:1097px;top:145px;color:#2A2A2A;font-size:11px">Controllers</div>
<svg class="a" style="left:1076px;top:164px" width="6" height="9" viewBox="0 0 6 9"><path d="M0.8 0.8L5 4.5L0.8 8.2z" fill="none" stroke="#3A3A46" stroke-width="1.1"/></svg>
<svg class="a" style="left:1096px;top:165px" width="7" height="8" viewBox="0 0 7 8"><path d="M5.8 1.6 A3 3.1 0 1 0 5.8 6.4" fill="none" stroke="#3F9550" stroke-width="1.4"/></svg>
<svg class="a" style="left:1103px;top:165px" width="6" height="7" viewBox="0 0 6 7"><path d="M1.9 0.3v6M4.1 0.3v6M0.2 2.2h5.6M0.2 4.4h5.6" stroke="#3F9550" stroke-width="1.1"/></svg>
<div class="t" style="left:1113px;top:162px;color:#2A2A2A;font-size:11px">GroupController.cs</div>
<svg class="a" style="left:1076px;top:181px" width="6" height="9" viewBox="0 0 6 9"><path d="M0.8 0.8L5 4.5L0.8 8.2z" fill="none" stroke="#3A3A46" stroke-width="1.1"/></svg>
<svg class="a" style="left:1096px;top:182px" width="7" height="8" viewBox="0 0 7 8"><path d="M5.8 1.6 A3 3.1 0 1 0 5.8 6.4" fill="none" stroke="#3F9550" stroke-width="1.4"/></svg>
<svg class="a" style="left:1103px;top:182px" width="6" height="7" viewBox="0 0 6 7"><path d="M1.9 0.3v6M4.1 0.3v6M0.2 2.2h5.6M0.2 4.4h5.6" stroke="#3F9550" stroke-width="1.1"/></svg>
<div class="t" style="left:1113px;top:179px;color:#2A2A2A;font-size:11px">HomeController.cs</div>
<svg class="a" style="left:1076px;top:198px" width="6" height="9" viewBox="0 0 6 9"><path d="M0.8 0.8L5 4.5L0.8 8.2z" fill="none" stroke="#3A3A46" stroke-width="1.1"/></svg>
<svg class="a" style="left:1096px;top:198px" width="7" height="8" viewBox="0 0 7 8"><path d="M5.8 1.6 A3 3.1 0 1 0 5.8 6.4" fill="none" stroke="#3F9550" stroke-width="1.4"/></svg>
<svg class="a" style="left:1103px;top:198px" width="6" height="7" viewBox="0 0 6 7"><path d="M1.9 0.3v6M4.1 0.3v6M0.2 2.2h5.6M0.2 4.4h5.6" stroke="#3F9550" stroke-width="1.1"/></svg>
<div class="t" style="left:1113px;top:195px;color:#2A2A2A;font-size:11px">TestController.cs</div>
<svg class="a" style="left:1059px;top:216px" width="7" height="7" viewBox="0 0 7 7"><path d="M6.5 0.5V6.5H0.5z" fill="#1E1E1E"/></svg>
<svg class="a" style="left:1080px;top:214px" width="13" height="11" viewBox="0 0 13 11"><path d="M0.5 2.2V10.5h12V2.2H6L5 1H1.2z" fill="#D3BD7D" stroke="#A58C55" stroke-width="0.9"/><path d="M0.8 3.3h11.4" stroke="#C2A96A" stroke-width="0.8"/></svg>
<div class="t" style="left:1097px;top:212px;color:#2A2A2A;font-size:11px">Views</div>
<svg class="a" style="left:1075px;top:233px" width="7" height="7" viewBox="0 0 7 7"><path d="M6.5 0.5V6.5H0.5z" fill="#1E1E1E"/></svg>
<svg class="a" style="left:1096px;top:231px" width="13" height="11" viewBox="0 0 13 11"><path d="M0.5 2.2V10.5h12V2.2H6L5 1H1.2z" fill="#D3BD7D" stroke="#A58C55" stroke-width="0.9"/><path d="M0.8 3.3h11.4" stroke="#C2A96A" stroke-width="0.8"/></svg>
<div class="t" style="left:1113px;top:229px;color:#2A2A2A;font-size:11px">Group</div>
<svg class="a" style="left:1112px;top:246px" width="12" height="14" viewBox="0 0 12 14"><path d="M0.7 0.7h7.3l3.3 3.3v9.3H0.7z" fill="#E3E7E3" stroke="#454550" stroke-width="1.3"/><path d="M7.6 0.7v3.7h3.7z" fill="#454550"/><circle cx="6" cy="8" r="3" fill="none" stroke="#5DAA5D" stroke-width="1.2"/><circle cx="6" cy="8" r="1" fill="#5DAA5D"/></svg>
<div class="t" style="left:1129px;top:246px;color:#2A2A2A;font-size:11px">CreateGroup.cshtml</div>
<svg class="a" style="left:1112px;top:263px" width="12" height="14" viewBox="0 0 12 14"><path d="M0.7 0.7h7.3l3.3 3.3v9.3H0.7z" fill="#E3E7E3" stroke="#454550" stroke-width="1.3"/><path d="M7.6 0.7v3.7h3.7z" fill="#454550"/><circle cx="6" cy="8" r="3" fill="none" stroke="#5DAA5D" stroke-width="1.2"/><circle cx="6" cy="8" r="1" fill="#5DAA5D"/></svg>
<div class="t" style="left:1129px;top:263px;color:#2A2A2A;font-size:11px">Index.cshtml</div>
<svg class="a" style="left:1075px;top:284px" width="7" height="7" viewBox="0 0 7 7"><path d="M6.5 0.5V6.5H0.5z" fill="#1E1E1E"/></svg>
<svg class="a" style="left:1096px;top:281px" width="13" height="11" viewBox="0 0 13 11"><path d="M0.5 2.2V10.5h12V2.2H6L5 1H1.2z" fill="#D3BD7D" stroke="#A58C55" stroke-width="0.9"/><path d="M0.8 3.3h11.4" stroke="#C2A96A" stroke-width="0.8"/></svg>
<div class="t" style="left:1113px;top:280px;color:#2A2A2A;font-size:11px">Home</div>
<svg class="a" style="left:1112px;top:296px" width="12" height="14" viewBox="0 0 12 14"><path d="M0.7 0.7h7.3l3.3 3.3v9.3H0.7z" fill="#E3E7E3" stroke="#454550" stroke-width="1.3"/><path d="M7.6 0.7v3.7h3.7z" fill="#454550"/><circle cx="6" cy="8" r="3" fill="none" stroke="#5DAA5D" stroke-width="1.2"/><circle cx="6" cy="8" r="1" fill="#5DAA5D"/></svg>
<div class="t" style="left:1129px;top:296px;color:#2A2A2A;font-size:11px">Index.cshtml</div>
<svg class="a" style="left:1075px;top:317px" width="7" height="7" viewBox="0 0 7 7"><path d="M6.5 0.5V6.5H0.5z" fill="#1E1E1E"/></svg>
<svg class="a" style="left:1096px;top:315px" width="13" height="11" viewBox="0 0 13 11"><path d="M0.5 2.2V10.5h12V2.2H6L5 1H1.2z" fill="#D3BD7D" stroke="#A58C55" stroke-width="0.9"/><path d="M0.8 3.3h11.4" stroke="#C2A96A" stroke-width="0.8"/></svg>
<div class="t" style="left:1113px;top:313px;color:#2A2A2A;font-size:11px">Shared</div>
<svg class="a" style="left:1112px;top:330px" width="12" height="14" viewBox="0 0 12 14"><path d="M0.7 0.7h7.3l3.3 3.3v9.3H0.7z" fill="#E3E7E3" stroke="#454550" stroke-width="1.3"/><path d="M7.6 0.7v3.7h3.7z" fill="#454550"/><circle cx="6" cy="8" r="3" fill="none" stroke="#5DAA5D" stroke-width="1.2"/><circle cx="6" cy="8" r="1" fill="#5DAA5D"/></svg>
<div class="t" style="left:1129px;top:330px;color:#2A2A2A;font-size:11px">_UserLayout.cshtml</div>
<svg class="a" style="left:1076px;top:350px" width="6" height="9" viewBox="0 0 6 9"><path d="M0.8 0.8L5 4.5L0.8 8.2z" fill="none" stroke="#3A3A46" stroke-width="1.1"/></svg>
<svg class="a" style="left:1096px;top:349px" width="13" height="11" viewBox="0 0 13 11"><path d="M0.5 2.2V10.5h12V2.2H6L5 1H1.2z" fill="#D3BD7D" stroke="#A58C55" stroke-width="0.9"/><path d="M0.8 3.3h11.4" stroke="#C2A96A" stroke-width="0.8"/></svg>
<div class="t" style="left:1113px;top:347px;color:#2A2A2A;font-size:11px">Test</div>
<svg class="a" style="left:1096px;top:364px" width="12" height="14" viewBox="0 0 12 14"><path d="M0.7 0.7h7.3l3.3 3.3v9.3H0.7z" fill="#E3E7E3" stroke="#454550" stroke-width="1.3"/><path d="M7.6 0.7v3.7h3.7z" fill="#454550"/><circle cx="6" cy="8" r="3" fill="none" stroke="#5DAA5D" stroke-width="1.2"/><circle cx="6" cy="8" r="1" fill="#5DAA5D"/></svg>
<div class="t" style="left:1113px;top:364px;color:#2A2A2A;font-size:11px">_ViewImports.cshtml</div>
<svg class="a" style="left:1096px;top:381px" width="12" height="14" viewBox="0 0 12 14"><path d="M0.7 0.7h7.3l3.3 3.3v9.3H0.7z" fill="#E3E7E3" stroke="#454550" stroke-width="1.3"/><path d="M7.6 0.7v3.7h3.7z" fill="#454550"/><circle cx="6" cy="8" r="3" fill="none" stroke="#5DAA5D" stroke-width="1.2"/><circle cx="6" cy="8" r="1" fill="#5DAA5D"/></svg>
<div class="t" style="left:1113px;top:381px;color:#2A2A2A;font-size:11px">_ViewStart.cshtml</div>
<svg class="a" style="left:1028px;top:400px" width="6" height="9" viewBox="0 0 6 9"><path d="M0.8 0.8L5 4.5L0.8 8.2z" fill="none" stroke="#3A3A46" stroke-width="1.1"/></svg>
<svg class="a" style="left:1048px;top:399px" width="13" height="11" viewBox="0 0 13 11"><path d="M0.5 2.2V10.5h12V2.2H6L5 1H1.2z" fill="#D3BD7D" stroke="#A58C55" stroke-width="0.9"/><path d="M0.8 3.3h11.4" stroke="#C2A96A" stroke-width="0.8"/></svg>
<div class="t" style="left:1065px;top:398px;color:#2A2A2A;font-size:11px">Controllers</div>
<div class="a" style="left:1004px;top:409px;width:276px;height:17px;background:#5E6B9F;"></div>
<div class="a" style="left:1004px;top:409px;width:88px;height:17px;background:#FBFBFE;"></div>
<div class="t" style="left:1008px;top:411px;color:#333;font-size:11.3px">Solution Explorer</div>
<div class="a" style="left:1092px;top:409px;width:65px;height:17px;background:#4B5B97;"></div>
<div class="t" style="left:1097px;top:411px;color:#E2E7F7;font-size:11.3px">Git Changes</div>
<div class="a" style="left:1004px;top:426px;width:276px;height:7px;background:#5E6B9F;"></div>
<div class="a" style="left:1004px;top:433px;width:276px;height:18px;background:#4B5B97;"></div>
<div class="t" style="left:1006px;top:435px;color:#fff;font-size:11.5px">Properties</div>
<svg class="a" style="left:1263px;top:439px" width="8" height="5" viewBox="0 0 8 5"><path d="M0 0h8L4 4.5z" fill="#BFC7E8"/></svg>
<svg class="a" style="left:1276px;top:436px" width="6" height="12" viewBox="0 0 6 12"><path d="M1 1h5M1.5 1v6M0 7.5h6" fill="none" stroke="#DDE3F7" stroke-width="1"/></svg>
<div class="a" style="left:1004px;top:451px;width:276px;height:244px;background:#FBFBFE;"></div>
<div class="a" style="left:1004px;top:472px;width:276px;height:22px;background:#CFD6F2;"></div>
<div class="a" style="left:1005px;top:473px;width:21px;height:20px;background:#FCE9C6;border:1px solid #C9B58A"></div>
<svg class="a" style="left:1008px;top:476px" width="15" height="14" viewBox="0 0 15 14"><rect x="0.5" y="0.5" width="3" height="3" fill="none" stroke="#3A3A46"/><rect x="0.5" y="9.5" width="3" height="3" fill="none" stroke="#3A3A46"/><path d="M5 2h2M5 11h3" stroke="#3A3A46"/><rect x="8" y="1" width="6" height="8" fill="#9097B5"/><path d="M8 12h6" stroke="#3A3A46"/></svg>
<svg class="a" style="left:1029px;top:475px" width="14" height="16" viewBox="0 0 14 16"><text x="0" y="7" font-family="Liberation Sans" font-size="7" font-weight="bold" fill="#3A3A46">A</text><text x="0" y="15" font-family="Liberation Sans" font-size="7" font-weight="bold" fill="#3A3A46">Z</text><path d="M10.5 3v10M8 10.5l2.5 2.5l2.5-2.5" fill="none" stroke="#2E6BB8" stroke-width="1.5"/></svg>
<div class="a" style="left:1048px;top:476px;width:1px;height:15px;background:#B3BAD6;"></div>
<svg class="a" style="left:1054px;top:476px" width="14" height="14" viewBox="0 0 14 14"><path d="M1.8 12.2L7.5 6.5" stroke="#A5ABC2" stroke-width="2.3" stroke-linecap="round"/><circle cx="9.3" cy="4.7" r="3.9" fill="#A5ABC2"/><path d="M9.3 4.7L11.2 -0.5L15 -0.5L15 2.8z" fill="#CFD6F2"/><circle cx="9.3" cy="4.7" r="1.3" fill="#CFD6F2"/></svg>
<div class="a" style="left:1004px;top:640px;width:276px;height:1px;background:#F4F4F8;"></div>
</body></html>
